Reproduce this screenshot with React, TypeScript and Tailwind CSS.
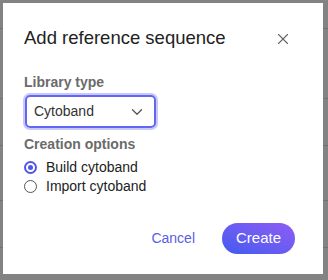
import { useState } from 'react';
import { X, ChevronDown } from 'lucide-react';

const options = ['Build cytoband', 'Import cytoband'];

export default function App() {
  const [choice, setChoice] = useState(options[0]);

  return (
    <div
      className="relative h-[280px] w-[328px] overflow-hidden bg-[#838383] p-[3px] pr-[5px] pb-[6px]"
      style={{ fontFamily: '"Liberation Sans", Arial, sans-serif' }}
    >
      {/* page rows behind the overlay */}
      <div className="absolute inset-0 flex flex-col">
        <div className="h-[29px] border-b border-[#727272]" />
        <div className="h-[70px] border-b border-[#727272]" />
        <div className="h-[47px] border-b border-[#727272]" />
        <div className="h-[55px] border-b border-[#727272]" />
        <div className="h-[47px] border-b border-[#727272]" />
      </div>

      {/* Dialog */}
      <div className="relative flex h-full flex-col bg-white pl-[21px] pr-[28px] pt-[21px] pb-[20px]">
        <div className="flex items-center justify-between">
          <h2 className="text-[18.5px] leading-[28px] text-[#222]">Add reference sequence</h2>
          <button className="mr-[3px] mt-[1px] text-[#666]">
            <X size={18} strokeWidth={1.5} />
          </button>
        </div>

        <label className="mt-[22px] text-[14px] font-bold leading-[16px] text-[#6b6b6b]">
          Library type
        </label>
        <div className="mt-[5px] ml-[1px] flex h-[33px] w-[131px] items-center justify-between rounded-[5px] border-2 border-[#6366f1] pl-[7px] pr-[8px] ring-2 ring-[#c7c8fb]">
          <span className="text-[14px] text-[#333]">Cytoband</span>
          <ChevronDown size={18} strokeWidth={1.75} className="text-[#555]" />
        </div>

        <label className="mt-[8px] text-[14px] font-bold leading-[16px] text-[#6b6b6b]">
          Creation options
        </label>
        <div className="mt-[6px] flex flex-col">
          {options.map((opt) => (
            <button
              key={opt}
              onClick={() => setChoice(opt)}
              className="flex h-[19px] items-center gap-[9px] text-left"
            >
              <span
                className={`flex h-[13px] w-[13px] items-center justify-center rounded-full border ${
                  choice === opt ? 'border-2 border-[#4f56e8]' : 'border-[#555]'
                }`}
              >
                {choice === opt && <span className="h-[5px] w-[5px] rounded-full bg-[#4f56e8]" />}
              </span>
              <span className="text-[14px] text-[#222]">{opt}</span>
            </button>
          ))}
        </div>

        <div className="mt-auto flex items-center justify-end gap-[27px]">
          <button className="text-[14px] text-[#5a5de8]">Cancel</button>
          <button className="h-[31px] w-[73px] rounded-full bg-gradient-to-tr from-[#3f5bf0] to-[#8d5cf5] text-[15px] text-white">
            Create
          </button>
        </div>
      </div>
    </div>
  );
}
